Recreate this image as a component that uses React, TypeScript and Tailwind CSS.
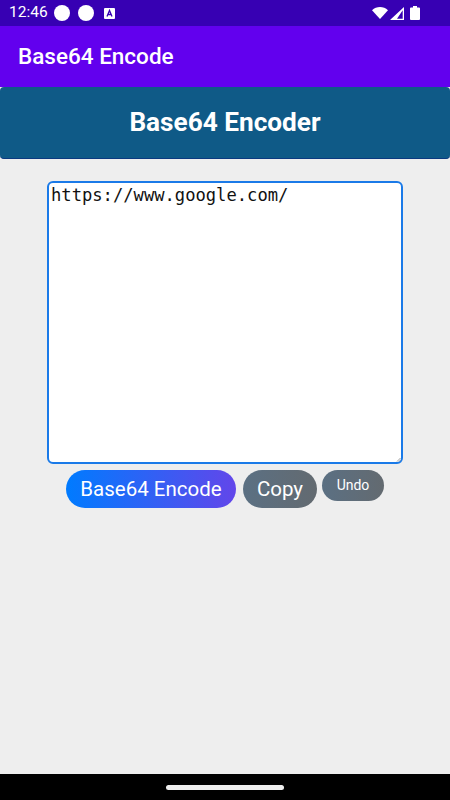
import React from 'react';

function StatusBar() {
  return (
    <div className="h-[26px] bg-[#3700b3] flex items-center pl-[9px] pr-[30px] text-white">
      <span className="text-[15.500px] leading-none w-[38px] whitespace-nowrap">12:46</span>
      <div className="ml-[7px] h-4 w-4 rounded-full bg-white" />
      <div className="ml-[8px] h-4 w-4 rounded-full bg-white" />
      <svg className="ml-[10px]" width="11" height="11" viewBox="0 0 11 11">
        <rect width="11" height="11" rx="1" fill="#fff" />
        <path d="M3 8.500 5.500 2.500 8 8.500M4 6.500h3" fill="none" stroke="#3700b3" strokeWidth="1.3" />
      </svg>
      <div className="ml-auto flex items-center">
        <svg width="16" height="12" viewBox="0 0 16 12">
          <path d="M0 3.200C4.500-1 11.500-1 16 3.200L8 12Z" fill="#fff" />
        </svg>
        <svg className="ml-[2px]" width="14" height="13" viewBox="0 0 14 13">
          <path d="M14 0V13H0ZM12.700 3.200 7 11.800H12.700Z" fill="#fff" fillRule="evenodd" />
        </svg>
        <svg className="ml-[6px]" width="10" height="14" viewBox="0 0 10 14">
          <path d="M3 0h4v1.500h2a1 1 0 0 1 1 1V13a1 1 0 0 1-1 1H1a1 1 0 0 1-1-1V2.500a1 1 0 0 1 1-1h2Z" fill="#fff" />
        </svg>
      </div>
    </div>
  );
}

export default function App() {
  return (
    <div className="w-[450px] h-[800px] flex flex-col bg-[#eeeeee] font-['Roboto',sans-serif] overflow-hidden">
      <StatusBar />
      <div className="h-[61px] bg-[#6200ee] flex items-center pl-[18px] text-white text-[22.500px] font-medium">
        Base64 Encode
      </div>

      <div className="h-[72px] rounded-[4px] bg-[#0f5a87] border-b border-[#0b3a80] flex items-center justify-center text-white text-[26.200px] font-bold">
        Base64 Encoder
      </div>

      <div className="flex-1 flex flex-col items-center pt-[22px]">
        <div className="relative w-[356px] h-[283px] bg-white border-2 border-[#1a7ae8] rounded-[6px] px-[2px] py-[2px] font-['DejaVu_Sans_Mono',monospace] text-[17.150px] leading-[20px] text-[#111111]">
          https://www.google.com/
          <svg className="absolute right-0 bottom-0" width="5" height="5" viewBox="0 0 5 5">
            <path d="M4.500 1 1 4.500M4.500 3 3 4.500" stroke="#8a8a8a" strokeWidth="0.8" />
          </svg>
        </div>
        <div className="mt-[6px] flex items-start">
          <button className="h-[38px] w-[170px] rounded-full bg-linear-to-r/srgb from-[#007bff] to-[#6246ea] text-white text-[20.500px]">
            Base64 Encode
          </button>
          <button className="ml-[7px] h-[38px] w-[74px] rounded-full bg-linear-to-r/srgb from-[#5b7083] to-[#636a70] text-white text-[20.500px]">
            Copy
          </button>
          <button className="ml-[5px] h-[31px] w-[62px] rounded-full bg-linear-to-r/srgb from-[#5b7083] to-[#636a70] text-white text-[14px]">
            Undo
          </button>
        </div>
      </div>

      <div className="h-[26px] bg-black flex items-center justify-center">
        <div className="w-[118px] h-[5px] rounded-full bg-[#eeeeee]" />
      </div>
    </div>
  );
}
